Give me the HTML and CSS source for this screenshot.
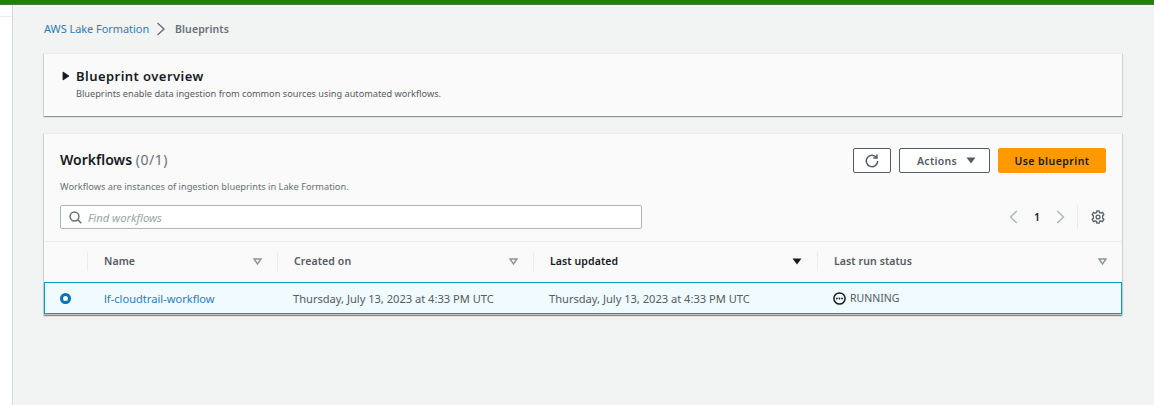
FILE: index.html
```html
<!DOCTYPE html>
<html lang="en">
<head>
<meta charset="utf-8">
<title>Blueprints</title>
<link rel="stylesheet" href="styles.css">
</head>
<body>
<div class="topbar"></div>
<div class="shell">
  <aside class="rail"><div class="rail-line"></div></aside>
  <main class="main">
    <nav class="crumbs">
      <a class="crumb-link">AWS Lake Formation</a>
      <svg class="crumb-sep" width="10" height="14" viewBox="0 0 10 14"><path d="M1.5 1 L8 7 L1.5 13" fill="none" stroke="#687078" stroke-width="1.4"/></svg>
      <span class="crumb-current">Blueprints</span>
    </nav>
    <section class="card overview">
      <div class="overview-head">
        <svg class="caret" width="8" height="10" viewBox="0 0 8 10"><path d="M1 1 L7 5 L1 9 Z" fill="#16191f" stroke="#16191f" stroke-width="0.8"/></svg>
        <h2 class="overview-title">Blueprint overview</h2>
      </div>
      <p class="overview-desc">Blueprints enable data ingestion from common sources using automated workflows.</p>
    </section>
    <section class="card workflows">
      <header class="wf-head">
        <div class="wf-top">
          <h2 class="wf-title">Workflows <span class="wf-count">(0/1)</span></h2>
          <div class="wf-actions">
            <button class="btn btn-icon" aria-label="Refresh">
              <svg width="14" height="14" viewBox="0 0 14 14"><path d="M11.6 3.6 A5.7 5.7 0 1 0 12.7 7" fill="none" stroke="#545b64" stroke-width="1.5"/><path d="M8.3 3.9 H12 V0.6" fill="none" stroke="#545b64" stroke-width="1.5"/></svg>
            </button>
            <button class="btn btn-actions">Actions
              <svg width="10" height="7" viewBox="0 0 10 7"><path d="M0.5 0.5 H9.5 L5 6.5 Z" fill="#545b64"/></svg>
            </button>
            <button class="btn btn-primary">Use blueprint</button>
          </div>
        </div>
        <p class="wf-desc">Workflows are instances of ingestion blueprints in Lake Formation.</p>
        <div class="wf-tools">
          <label class="search">
            <svg width="13" height="13" viewBox="0 0 13 13"><circle cx="5.5" cy="5.5" r="4.4" fill="none" stroke="#687078" stroke-width="1.5"/><path d="M8.7 8.7 L12.3 12.3" stroke="#687078" stroke-width="1.6"/></svg>
            <span class="search-text">Find workflows</span>
          </label>
          <div class="pager">
            <svg width="9" height="14" viewBox="0 0 9 14"><path d="M7.8 1 L1.5 7 L7.8 13" fill="none" stroke="#aab7b8" stroke-width="1.4"/></svg>
            <span class="page-num">1</span>
            <svg width="9" height="14" viewBox="0 0 9 14"><path d="M1.2 1 L7.5 7 L1.2 13" fill="none" stroke="#aab7b8" stroke-width="1.4"/></svg>
            <span class="pager-div"></span>
            <svg width="14" height="14" viewBox="0 0 14 14"><path d="M5.9 0.9 H8.1 L8.5 2.6 L9.9 3.2 L11.4 2.3 L12.9 4.5 L11.6 5.7 V8.3 L12.9 9.5 L11.4 11.7 L9.9 10.8 L8.5 11.4 L8.1 13.1 H5.9 L5.5 11.4 L4.1 10.8 L2.6 11.7 L1.1 9.5 L2.4 8.3 V5.7 L1.1 4.5 L2.6 2.3 L4.1 3.2 L5.5 2.6 Z" fill="none" stroke="#545b64" stroke-width="1.3" stroke-linejoin="round"/><circle cx="7" cy="7" r="1.9" fill="none" stroke="#545b64" stroke-width="1.3"/></svg>
          </div>
        </div>
      </header>
      <div class="table">
        <div class="row row-head">
          <div class="cell c-sel"></div>
          <div class="cell c-name th"><span>Name</span><svg class="sort" width="9" height="7" viewBox="0 0 9 7"><path d="M1 1 H8 L4.5 6 Z" fill="none" stroke="#879596" stroke-width="1.4"/></svg></div>
          <div class="cell c-created th"><span>Created on</span><svg class="sort" width="9" height="7" viewBox="0 0 9 7"><path d="M1 1 H8 L4.5 6 Z" fill="none" stroke="#879596" stroke-width="1.4"/></svg></div>
          <div class="cell c-updated th th-active"><span>Last updated</span><svg class="sort" width="10" height="7" viewBox="0 0 10 7"><path d="M0.5 0.5 H9.5 L5 6.5 Z" fill="#16191f"/></svg></div>
          <div class="cell c-status th"><span>Last run status</span><svg class="sort" width="9" height="7" viewBox="0 0 9 7"><path d="M1 1 H8 L4.5 6 Z" fill="none" stroke="#879596" stroke-width="1.4"/></svg></div>
        </div>
        <div class="row row-body">
          <div class="td d-sel"><span class="radio"></span></div>
          <div class="td d-name"><a class="link">lf-cloudtrail-workflow</a></div>
          <div class="td d-created">Thursday, July 13, 2023 at 4:33 PM UTC</div>
          <div class="td d-updated">Thursday, July 13, 2023 at 4:33 PM UTC</div>
          <div class="td d-status">
            <svg width="13" height="13" viewBox="0 0 13 13"><circle cx="6.5" cy="6.5" r="5.6" fill="none" stroke="#16191f" stroke-width="1.5"/><circle cx="3.9" cy="6.5" r="0.9" fill="#16191f"/><circle cx="6.5" cy="6.5" r="0.9" fill="#16191f"/><circle cx="9.1" cy="6.5" r="0.9" fill="#16191f"/></svg>
            <span>RUNNING</span>
          </div>
        </div>
      </div>
    </section>
  </main>
</div>
</body>
</html>
```
FILE: styles.css
```css
* { box-sizing: border-box; }
html, body { margin: 0; height: 100%; }
body {
  width: 1154px;
  height: 405px;
  overflow: hidden;
  background: #f2f3f3;
  font-family: "Noto Sans", "Open Sans", sans-serif;
  font-size: 10px;
  color: #16191f;
  display: flex;
  flex-direction: column;
}
.topbar { height: 5px; flex: none; background: #1d8102; border-bottom: 1px solid #4d7a45; }
.shell { flex: 1; display: flex; min-height: 0; }
.rail { width: 13px; flex: none; background: #fff; border-right: 1px solid #d5dbdb; padding-top: 11px; }
.rail-line { height: 1px; background: #eaeded; }
.main { flex: 1; padding: 15px 32px 0 31px; min-width: 0; }

.crumbs { display: flex; align-items: center; height: 17px; font-size: 10.9px; }
.crumb-link { color: #2b7cb8; width: 105px; white-space: nowrap; }
.crumb-sep { margin: 1px 9px 0 7px; }
.crumb-current { color: #687078; font-weight: 600; font-size: 10.5px; letter-spacing: .1px; }

.card { background: #fafafa; box-shadow: 0 1px 1px rgba(0,28,36,.3), 1px 1px 1px rgba(0,28,36,.10), -1px 1px 1px rgba(0,28,36,.10); border-top: 1px solid #eaeded; }
.overview { height: 63px; margin-top: 16px; padding: 13px 18px 0 18px; }
.overview-head { display: flex; align-items: center; gap: 6px; height: 18px; }
.overview-title { margin: 0; font-size: 13px; font-weight: 600; letter-spacing: .45px; line-height: 18px; }
.overview-desc { margin: 2px 0 0 14px; font-size: 9.2px; line-height: 14px; color: #545b64; }

.workflows { margin-top: 17px; height: 182px; }
.wf-head { padding: 14px 16px 0 16px; height: 108px; border-bottom: 1px solid #eaeded; }
.wf-top { display: flex; justify-content: space-between; align-items: flex-start; height: 26px; }
.wf-title { margin: 3px 0 0; font-size: 14px; font-weight: 600; line-height: 18px; }
.wf-count { font-weight: 400; color: #687078; letter-spacing: .5px; }
.wf-actions { display: flex; gap: 8px; }
.btn { height: 25px; background: #fff; border: 1px solid #545b64; border-radius: 2px; font: 600 10.5px "Noto Sans", sans-serif; color: #545b64; padding: 0; display: flex; align-items: center; justify-content: center; letter-spacing: .3px; }
.btn-icon { width: 38px; }
.btn-actions { width: 91px; gap: 9px; padding-left: 4px; }
.btn-primary { width: 108px; background: #ff9900; border-color: #ff9900; color: #16191f; letter-spacing: .45px; }

.wf-desc { margin: 6px 0 0; font-size: 9.24px; line-height: 14px; color: #687078; }
.wf-tools { display: flex; justify-content: space-between; align-items: center; margin-top: 11px; }
.search { width: 582px; height: 24px; background: #fff; border: 1px solid #aab7b8; border-radius: 2px; display: flex; align-items: center; gap: 6px; padding-left: 8px; }
.search-text { font-size: 11.2px; font-style: italic; color: #95a5a6; }
.pager { display: flex; align-items: center; height: 24px; padding-right: 1px; }
.page-num { width: 38px; text-align: center; font-size: 10.5px; font-weight: 600; }
.pager-div { width: 1px; height: 24px; background: #eaeded; margin: 0 13px 0 12px; }

.row { display: grid; grid-template-columns: 43px 190px 256px 284px 1fr; }
.row-head { height: 40px; align-items: center; padding-bottom: 2px; }
.cell { height: 19px; display: flex; align-items: center; justify-content: space-between; }
.th { border-left: 1px solid #eaeded; padding: 0 15px 0 16px; font-size: 10.5px; font-weight: 600; color: #545b64; letter-spacing: .1px; }
.th-active { color: #16191f; }
.sort { flex: none; }

.row-body { height: 32px; width: 1078px; background: #f1faff; border: 1px solid #00a1c9; align-items: center; font-size: 11.1px; color: #545b64; grid-template-columns: 43px 189px 256px 284px 1fr; box-shadow: 0 1px 1px rgba(0,28,36,.25); }
.td { padding-left: 16px; white-space: nowrap; }
.d-sel { padding-left: 15px; display: flex; }
.link { color: #2b7cb8; }
.radio { width: 11px; height: 11px; border-radius: 50%; background: #fff; border: 3.5px solid #0073bb; }
.d-status { display: flex; align-items: center; gap: 4px; color: #16191f; font-size: 10.5px; }
.d-status span { color: #545b64; }
```
